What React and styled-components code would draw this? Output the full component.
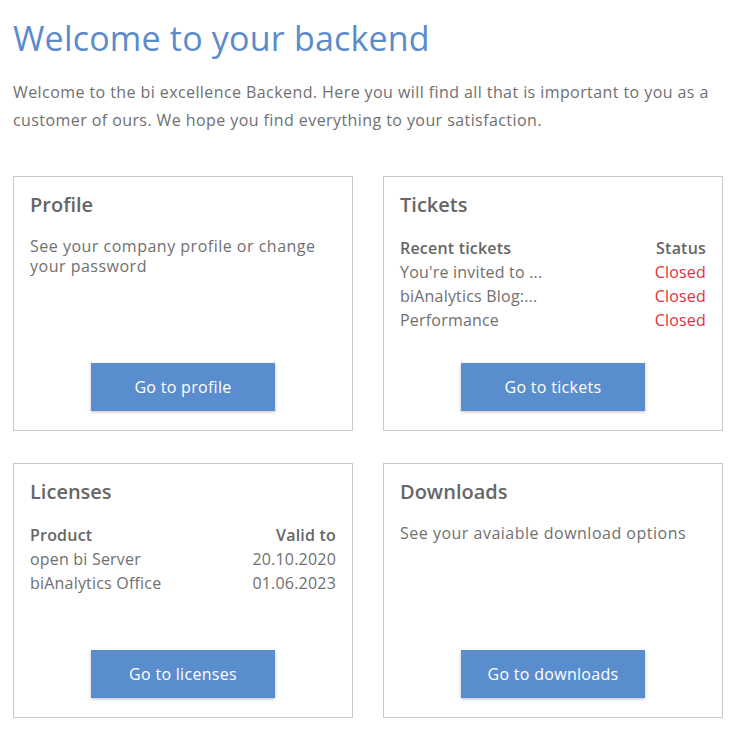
import React from "react";
import styled, { createGlobalStyle } from "styled-components";

const GlobalStyle = createGlobalStyle`
  body {
    margin: 0;
    background: #fff;
    font-family: "Open Sans", "Liberation Sans", sans-serif;
    color: #707070;
  }
`;

const Page = styled.div`
  padding: 14px 13px 0;
`;

const Title = styled.h1`
  margin: 0;
  font-size: 34px;
  font-weight: 400;
  line-height: 48px;
  letter-spacing: 0.2px;
  color: #5b8bcb;
`;

const Intro = styled.p`
  margin: 16px 0 0;
  font-size: 16px;
  line-height: 28px;
  letter-spacing: 0.42px;
  color: #707070;
  max-width: 710px;
`;

const Grid = styled.div`
  display: grid;
  grid-template-columns: 340px 340px;
  column-gap: 30px;
  row-gap: 32px;
  margin-top: 42px;
`;

const Card = styled.section`
  box-sizing: border-box;
  height: 255px;
  border: 1px solid #c9c9c9;
  padding: 16px 16px 19px;
  display: flex;
  flex-direction: column;
`;

const CardTitle = styled.h2`
  margin: 0;
  font-size: 20px;
  font-weight: 600;
  line-height: 24px;
  color: #666;
`;

const CardText = styled.p`
  margin: 19px 0 0;
  font-size: 16px;
  line-height: 20px;
  letter-spacing: 0.5px;
  color: #707070;
`;

const Table = styled.div`
  margin-top: 19px;
  display: flex;
  flex-direction: column;
`;

const Row = styled.div`
  display: flex;
  justify-content: space-between;
  font-size: 16px;
  line-height: 24px;
  letter-spacing: 0.2px;
  color: ${(p) => (p.$head ? "#666" : "#707070")};
  font-weight: ${(p) => (p.$head ? 600 : 400)};
`;

const Status = styled.span`
  color: #e0313f;
`;

const Button = styled.button`
  margin: auto auto 0;
  width: 184px;
  height: 48px;
  border: none;
  background: #5a8dcd;
  color: #fff;
  font-family: inherit;
  font-size: 16px;
  letter-spacing: 0.3px;
  box-shadow: 0 1px 3px rgba(0, 0, 0, 0.25);
  cursor: pointer;
`;

const tickets = [
  "You're invited to ...",
  "biAnalytics Blog:...",
  "Performance",
];

const licenses = [
  ["open bi Server", "20.10.2020"],
  ["biAnalytics Office", "01.06.2023"],
];

export default function App() {
  return (
    <Page>
      <GlobalStyle />
      <Title>Welcome to your backend</Title>
      <Intro>
        Welcome to the bi excellence Backend. Here you will find all that is important to you as a
        customer of ours. We hope you find everything to your satisfaction.
      </Intro>
      <Grid>
        <Card>
          <CardTitle>Profile</CardTitle>
          <CardText>See your company profile or change your password</CardText>
          <Button>Go to profile</Button>
        </Card>
        <Card>
          <CardTitle>Tickets</CardTitle>
          <Table>
            <Row $head>
              <span>Recent tickets</span>
              <span>Status</span>
            </Row>
            {tickets.map((t) => (
              <Row key={t}>
                <span>{t}</span>
                <Status>Closed</Status>
              </Row>
            ))}
          </Table>
          <Button>Go to tickets</Button>
        </Card>
        <Card>
          <CardTitle>Licenses</CardTitle>
          <Table>
            <Row $head>
              <span>Product</span>
              <span>Valid to</span>
            </Row>
            {licenses.map(([name, date]) => (
              <Row key={name}>
                <span>{name}</span>
                <span>{date}</span>
              </Row>
            ))}
          </Table>
          <Button>Go to licenses</Button>
        </Card>
        <Card>
          <CardTitle>Downloads</CardTitle>
          <CardText>See your avaiable download options</CardText>
          <Button>Go to downloads</Button>
        </Card>
      </Grid>
    </Page>
  );
}
